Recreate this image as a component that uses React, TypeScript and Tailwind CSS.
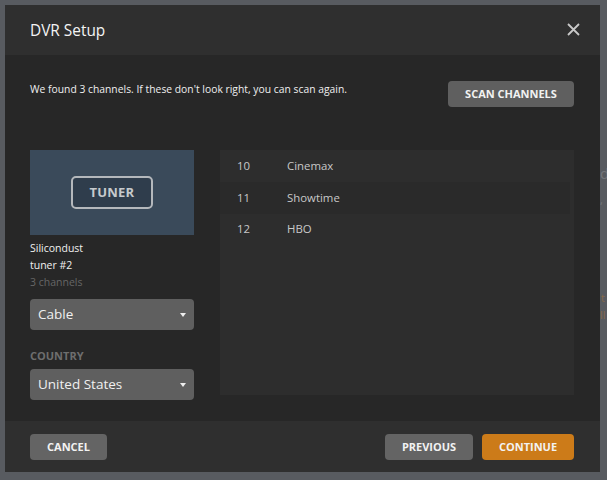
const font = { fontFamily: '"Open Sans", sans-serif' };

function Select({ label }: { label: string }) {
  return (
    <div className="h-[31px] rounded-[4px] bg-[#5f5f5f] pl-[8px] pr-[8px] flex items-center justify-between text-[13.5px] text-[#f0f0f0]">
      <span>{label}</span>
      <span className="w-0 h-0 border-l-[3px] border-r-[3px] border-t-[4px] border-l-transparent border-r-transparent border-t-[#eeeeee]" />
    </div>
  );
}

function Btn({ label, cls }: { label: string; cls: string }) {
  return (
    <div className={`h-[26px] rounded-[4px] flex items-center justify-center text-[11px] font-bold text-[#f2f2f2] ${cls}`}>
      {label}
    </div>
  );
}

export default function App() {
  return (
    <div style={font} className="relative w-[607px] h-[480px] overflow-hidden bg-[#585b60] pt-[5px] pl-[5px]">
      <span className="absolute left-[600px] top-[163px] text-[15px] leading-[20px] text-[#74777b]">d</span>
      <span className="absolute left-[600px] top-[192px] text-[11px] leading-[16px] text-[#74777b]">,</span>
      <span className="absolute left-[601px] top-[290px] text-[11px] leading-[16px] text-[#86694a]">t</span>
      <span className="absolute left-[600px] top-[307px] text-[11px] leading-[16px] text-[#86694a]">ll</span>
      <div className="relative w-[595px] h-[467px] flex flex-col bg-[#272727]">
        <div className="h-[50px] bg-[#2f2f2f] flex items-center justify-between pl-[25px] pr-[20px]">
          <span className="text-[15.4px] pt-[1px] text-[#f4f4f4]">DVR Setup</span>
          <svg width="13" height="13" viewBox="0 0 13 13" className="mb-[1px]">
            <path d="M1 1L12 12M12 1L1 12" stroke="#c8c8c8" strokeWidth="1.8" fill="none" />
          </svg>
        </div>
        <div className="flex-1 pl-[25px] pr-[26px] pt-[26px] flex flex-col">
          <div className="flex justify-between items-start h-[69px]">
            <span className="text-[10.3px] tracking-[0.02px] leading-[16px] text-[#f0f0f0]">
              We found 3 channels. If these don't look right, you can scan again.
            </span>
            <Btn label="SCAN CHANNELS" cls="w-[126px] bg-[#5f5f5f]" />
          </div>
          <div className="flex gap-[26px]">
            <div className="w-[164px]">
              <div className="h-[85px] bg-[#3a4a5a] flex items-center justify-center">
                <div className="w-[82px] h-[33px] rounded-[5px] border-[2px] border-[#b4b8bc] bg-[#2f3d4c] flex items-center justify-center text-[13px] font-bold tracking-[0.2px] text-[#c6cacd]">
                  TUNER
                </div>
              </div>
              <div className="mt-[5px] text-[10.5px] leading-[17px] text-[#f0f0f0]">Silicondust</div>
              <div className="text-[10.5px] leading-[17px] text-[#f0f0f0]">tuner #2</div>
              <div className="text-[10.5px] leading-[17px] text-[#666666]">3 channels</div>
              <div className="mt-[8px]"><Select label="Cable" /></div>
              <div className="mt-[18px] mb-[6px] text-[11px] leading-[15px] font-bold text-[#6e6e6e]">COUNTRY</div>
              <Select label="United States" />
            </div>
            <div className="w-[354px] h-[245px] bg-[#2d2d2d]">
              {[["10", "Cinemax", "h-[32px]"], ["11", "Showtime", "h-[32px] bg-[#2a2a2a] mr-[4px]"], ["12", "HBO", "h-[30px]"]].map(([n, name, cls]) => (
                <div key={n} className={`flex items-center text-[11.4px] text-[#c8c8c8] ${cls}`}>
                  <span className="w-[67px] pl-[17px]">{n}</span>
                  <span>{name}</span>
                </div>
              ))}
            </div>
          </div>
        </div>
        <div className="h-[51px] bg-[#2f2f2f] flex items-center justify-between pl-[25px] pr-[26px]">
          <Btn label="CANCEL" cls="w-[77px] bg-[#646464] pt-[1px]" />
          <div className="flex gap-[9px]">
            <Btn label="PREVIOUS" cls="w-[88px] bg-[#646464] pt-[1px]" />
            <Btn label="CONTINUE" cls="w-[92px] bg-[#cc7b19] pt-[1px]" />
          </div>
        </div>
      </div>
    </div>
  );
}
